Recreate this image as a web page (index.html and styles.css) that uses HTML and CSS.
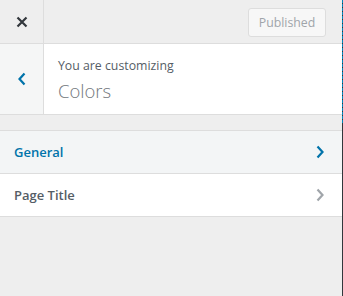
FILE: index.html
```html
<!DOCTYPE html>
<html lang="en">
<head>
    <meta charset="UTF-8">
    <meta name="viewport" content="width=device-width, initial-scale=1.0">
    <title>Customize Colors</title>
    <link rel="stylesheet" href="styles.css">
</head>
<body>
    <div class="sidebar">
        <div class="header">
            <div class="close-btn">
                <svg width="12" height="12" viewBox="0 0 12 12">
                    <path d="M1.5 1.5 L10.5 10.5 M10.5 1.5 L1.5 10.5" stroke="#32373c" stroke-width="2.2" fill="none"/>
                </svg>
            </div>
            <div class="header-right">
                <div class="publish-btn">Published</div>
            </div>
        </div>

        <div class="section-info">
            <div class="back-btn">
                <svg width="10" height="14" viewBox="0 0 10 14">
                    <path d="M7.5 1.5 L2.5 7 L7.5 12.5" stroke="#0073aa" stroke-width="2.2" fill="none"/>
                </svg>
            </div>
            <div class="section-title">
                <div class="action">You are customizing</div>
                <div class="name">Colors</div>
            </div>
        </div>

        <ul class="controls">
            <li class="control active">
                <span>General</span>
                <svg width="10" height="14" viewBox="0 0 10 14">
                    <path d="M2.5 1.5 L7.5 7 L2.5 12.5" stroke="#0073aa" stroke-width="2.2" fill="none"/>
                </svg>
            </li>
            <li class="control">
                <span>Page Title</span>
                <svg width="10" height="14" viewBox="0 0 10 14">
                    <path d="M2.5 1.5 L7.5 7 L2.5 12.5" stroke="#a0a5aa" stroke-width="2.2" fill="none"/>
                </svg>
            </li>
        </ul>
    </div>
    <div class="edge">
        <div class="edge-dash"></div>
    </div>
</body>
</html>
```

FILE: styles.css
```css
html, body {
    margin: 0;
    height: 100%;
}

body {
    display: flex;
    background: #eee;
    font-family: "Open Sans", "Liberation Sans", sans-serif;
    color: #555d66;
}

.sidebar {
    width: 342px;
    background: #eee;
}

.edge {
    width: 1px;
    background: #32373c;
}

.edge-dash {
    height: 124px;
    background: repeating-linear-gradient(to bottom, #0085ba 0, #0085ba 3px, #32373c 3px, #32373c 4px);
}

/* top bar */
.header {
    display: flex;
    height: 43px;
    border-bottom: 1px solid #ddd;
}

.close-btn {
    width: 43px;
    border-right: 1px solid #ddd;
    display: flex;
    align-items: center;
    justify-content: center;
}

.header-right {
    flex: 1;
    display: flex;
    align-items: center;
    justify-content: flex-end;
    padding-right: 16px;
}

.publish-btn {
    width: 76px;
    height: 27px;
    border: 1px solid #ddd;
    border-radius: 3px;
    background: #f7f7f7;
    color: #a0a5aa;
    font-size: 12.3px;
    display: flex;
    align-items: center;
    justify-content: center;
    margin-top: 1px;
}

/* section heading */
.section-info {
    display: flex;
    height: 70px;
    border-bottom: 1px solid #ddd;
    background: #fff;
}

.back-btn {
    width: 43px;
    border-right: 1px solid #ddd;
    background: #f5f6f6;
    display: flex;
    align-items: center;
    justify-content: center;
}

.section-title {
    padding: 13px 0 0 14px;
}

.action {
    font-size: 12.3px;
    line-height: 18px;
}

.name {
    font-size: 18.5px;
    font-weight: 300;
    line-height: 30px;
    margin-top: 1px;
    color: #72777c;
}

/* control list */
.controls {
    list-style: none;
    margin: 15px 0 0;
    padding: 0;
    border-top: 1px solid #ddd;
}

.control {
    display: flex;
    align-items: center;
    justify-content: space-between;
    height: 42px;
    padding: 0 17px 0 14px;
    border-bottom: 1px solid #ddd;
    background: #fff;
    font-size: 13px;
    font-weight: 600;
}

.control.active {
    background: #f3f5f6;
    color: #0073aa;
}
```
